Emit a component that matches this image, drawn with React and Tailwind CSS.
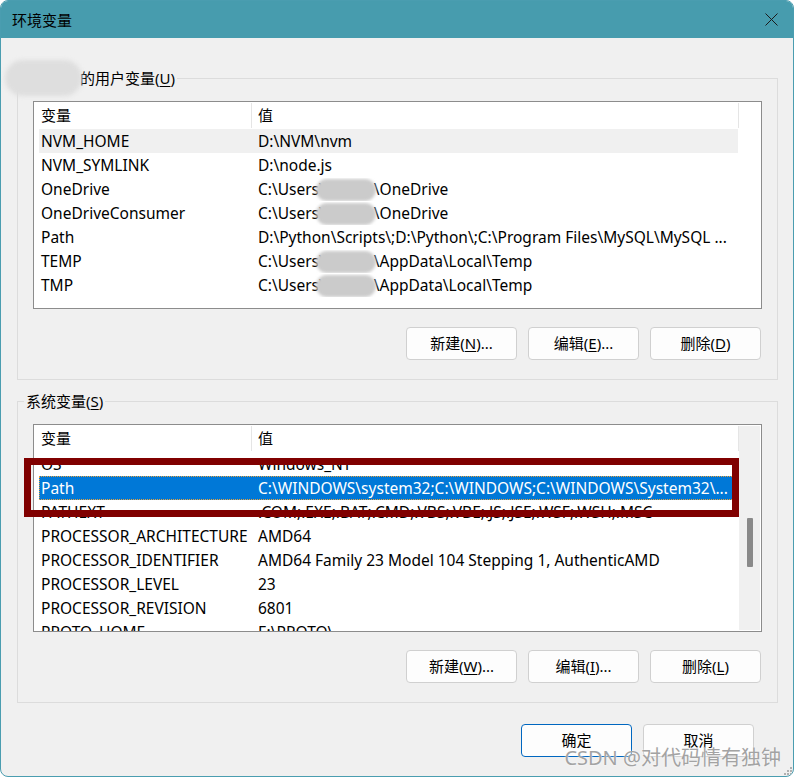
import React from "react";

const U = ({ children }) => (
  <span className="underline underline-offset-[2px] decoration-1">{children}</span>
);

const Name = () => (
  <span className="relative inline-block w-[49px] h-[20px] align-middle">
    <span className="absolute -left-[9px] -top-[1px] w-[60px] h-[22px] rounded-full bg-[#cbcbcb] blur-[1.5px]" />
  </span>
);

const userRows = [
  { n: "NVM_HOME", v: "D:\\NVM\\nvm", hl: true },
  { n: "NVM_SYMLINK", v: "D:\\node.js" },
  { n: "OneDrive", v: <>C:\Users\<Name />\OneDrive</> },
  { n: "OneDriveConsumer", v: <>C:\Users\<Name />\OneDrive</> },
  { n: "Path", v: "D:\\Python\\Scripts\\;D:\\Python\\;C:\\Program Files\\MySQL\\MySQL ..." },
  { n: "TEMP", v: <>C:\Users\<Name />\AppData\Local\Temp</> },
  { n: "TMP", v: <>C:\Users\<Name />\AppData\Local\Temp</> },
];

const sysRows = [
  { n: "OS", v: "Windows_NT" },
  { n: "Path", v: "C:\\WINDOWS\\system32;C:\\WINDOWS;C:\\WINDOWS\\System32\\...", sel: true },
  { n: "PATHEXT", v: ".COM;.EXE;.BAT;.CMD;.VBS;.VBE;.JS;.JSE;.WSF;.WSH;.MSC" },
  { n: "PROCESSOR_ARCHITECTURE", v: "AMD64" },
  { n: "PROCESSOR_IDENTIFIER", v: "AMD64 Family 23 Model 104 Stepping 1, AuthenticAMD" },
  { n: "PROCESSOR_LEVEL", v: "23" },
  { n: "PROCESSOR_REVISION", v: "6801" },
  { n: "PROTO_HOME", v: "E:\\PROTO\\" },
];

function Row({ r }) {
  let cls = "h-[24px] shrink-0 flex items-center leading-[23px] text-[15.5px] whitespace-nowrap";
  if (r.sel) cls += " bg-[#0078D7] text-white outline-1 outline-dotted outline-[#E9A13B] -outline-offset-1";
  else if (r.hl) cls += " bg-[#F0F0F0]";
  return (
    <div className={cls}>
      <div className="w-[213px] shrink-0 pl-[2px] overflow-hidden">{r.n}</div>
      <div className="flex-1 pl-[6px] overflow-hidden">{r.v}</div>
    </div>
  );
}

function ListBox({ rows, scroll }) {
  return (
    <div className="mt-[13px] mx-[15px] h-[208px] border border-[#8C8C8C] bg-white flex overflow-hidden">
      <div className="flex-1 flex flex-col min-w-0">
        <div className="h-[27px] shrink-0 flex items-center pl-[5px]">
          <div className="w-[212px] shrink-0 pl-[2px] leading-[27px]">变量</div>
          <div className="w-px h-[25px] bg-[#E5E5E5]" />
          <div className="flex-1 pl-[6px] leading-[27px]">值</div>
          <div className="w-px h-[25px] bg-[#E5E5E5]" />
        </div>
        <div className="flex-1 flex flex-col overflow-hidden pl-[5px] pr-[1px]">
          {rows.map((r, i) => (
            <Row key={i} r={r} />
          ))}
        </div>
      </div>
      <div className="w-[22px] shrink-0 bg-white py-[1px] pr-[1px]">
        {scroll && (
          <div className="h-full bg-[#F0F0F0] pt-[92px] pl-[8px]">
            <div className="w-[6px] h-[49px] bg-[#8A8A8A] rounded-[1px]" />
          </div>
        )}
      </div>
    </div>
  );
}

function Btn({ children, def }) {
  return (
    <div
      className={
        "w-[111px] h-[33px] rounded-[4px] border flex items-center justify-center bg-[#FDFDFD] " +
        (def ? "border-[#0067C0]" : "border-[#D0D0D0]")
      }
    >
      {children}
    </div>
  );
}

export default function App() {
  return (
    <div className="w-[794px] h-[777px] relative flex flex-col bg-[#F0F0F0] border border-[#4A9DB0] rounded-[8px] overflow-hidden text-black text-[15px] [font-family:'Noto_Sans','Noto_Sans_CJK_SC',sans-serif]">
      {/* title bar */}
      <div className="h-[37px] shrink-0 bg-[#479CAE] flex items-center justify-between pl-[11px] pr-[15px]">
        <span className="leading-[20px]">环境变量</span>
        <svg width="13" height="13" viewBox="0 0 13 13">
          <path d="M0.5 0.5 L12.5 12.5 M12.5 0.5 L0.5 12.5" stroke="#1a1a1a" strokeWidth="1" fill="none" />
        </svg>
      </div>

      <div className="flex-1 flex flex-col pl-[16px] pr-[15px]">
        {/* user variables */}
        <fieldset className="mt-[30px] border border-[#DCDCDC] p-0 pb-[19px] min-w-0">
          <legend className="ml-[6px] px-[2px] leading-[20px]">
            <span className="relative inline-block w-[54px] h-[20px] align-top">
              <span className="absolute -left-[21px] -top-[8px] w-[77px] h-[36px] rounded-full bg-[#dedede] blur-[2px]" />
            </span>
            的用户变量(<U>U</U>)
          </legend>
          <ListBox rows={userRows} />
          <div className="mt-[18px] flex justify-end gap-[11px] pr-[16px]">
            <Btn>新建(<U>N</U>)...</Btn>
            <Btn>编辑(<U>E</U>)...</Btn>
            <Btn>删除(<U>D</U>)</Btn>
          </div>
        </fieldset>

        {/* system variables */}
        <fieldset className="mt-[11px] border border-[#DCDCDC] p-0 pb-[19px] min-w-0">
          <legend className="ml-[6px] px-[2px] leading-[20px]">
            系统变量(<U>S</U>)
          </legend>
          <ListBox rows={sysRows} scroll />
          <div className="mt-[18px] flex justify-end gap-[11px] pr-[16px]">
            <Btn>新建(<U>W</U>)...</Btn>
            <Btn>编辑(<U>I</U>)...</Btn>
            <Btn>删除(<U>L</U>)</Btn>
          </div>
        </fieldset>

        <div className="mt-[21px] flex justify-end gap-[11px] mr-[24px]">
          <Btn def>确定</Btn>
          <Btn>取消</Btn>
        </div>
      </div>

      {/* red annotation box */}
      <div className="absolute left-[23px] top-[457px] w-[715px] h-[59px] border-[7px] border-[#800000]" />

      {/* watermark */}
      <div className="absolute right-[12px] bottom-[8px] text-[20px] leading-[20px] text-[#a3a3a3] [text-shadow:0_0_2px_#ffffff]">
        CSDN @对代码情有独钟
      </div>

      {/* resize grip */}
      <svg className="absolute right-[1px] bottom-[1px]" width="10" height="10" viewBox="0 0 10 10">
        <rect x="8" y="2" width="2" height="2" fill="#b0b0b0" />
        <rect x="5" y="5" width="2" height="2" fill="#b0b0b0" />
        <rect x="8" y="5" width="2" height="2" fill="#b0b0b0" />
        <rect x="2" y="8" width="2" height="2" fill="#b0b0b0" />
        <rect x="5" y="8" width="2" height="2" fill="#b0b0b0" />
        <rect x="8" y="8" width="2" height="2" fill="#b0b0b0" />
      </svg>
    </div>
  );
}
